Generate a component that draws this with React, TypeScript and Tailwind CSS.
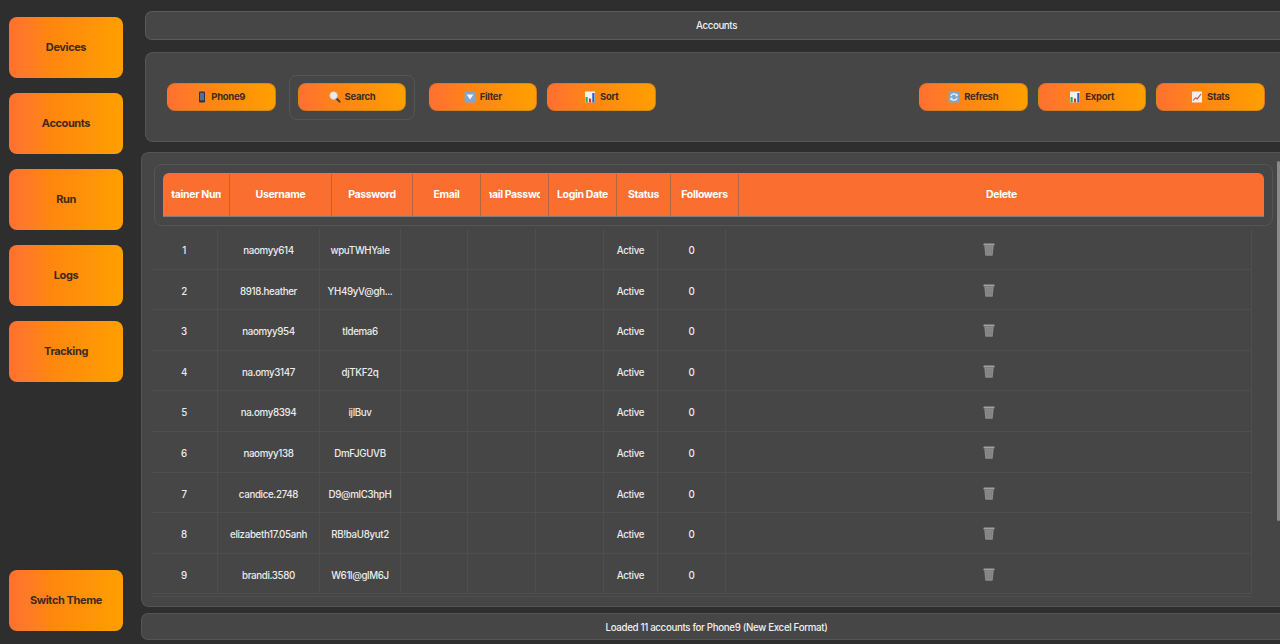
const sideItems = ["Devices", "Accounts", "Run", "Logs", "Tracking"];

const columns = [
  { label: "Container Number", head: "w-[67px]", body: "w-[66px]" },
  { label: "Username", head: "w-[102px]", body: "w-[102px]" },
  { label: "Password", head: "w-[81px]", body: "w-[81px]" },
  { label: "Email", head: "w-[68px]", body: "w-[67px]" },
  { label: "Email Password", head: "w-[68px]", body: "w-[68px]" },
  { label: "Login Date", head: "w-[68px]", body: "w-[68px]" },
  { label: "Status", head: "w-[54px]", body: "w-[54px]" },
  { label: "Followers", head: "w-[68px]", body: "w-[68px]" },
  { label: "Delete", head: "w-[525px]", body: "w-[526px]" },
];

const rows = [
  ["1", "naomyy614", "wpuTWHYale"],
  ["2", "8918.heather", "YH49yV@gh..."],
  ["3", "naomyy954", "tIdema6"],
  ["4", "na.omy3147", "djTKF2q"],
  ["5", "na.omy8394", "ijlBuv"],
  ["6", "naomyy138", "DmFJGUVB"],
  ["7", "candice.2748", "D9@mlC3hpH"],
  ["8", "elizabeth17.05anh", "RB!baU8yut2"],
  ["9", "brandi.3580", "W61l@glM6J"],
];

function PhoneIcon() {
  return (
    <svg width="10" height="12" viewBox="0 0 10 12">
      <rect x="2" y="0.5" width="6" height="11" rx="1" fill="#2b3442" />
      <rect x="3" y="1.8" width="4" height="7.6" fill="#56708c" />
    </svg>
  );
}

function SearchIcon() {
  return (
    <svg width="12" height="12" viewBox="0 0 12 12">
      <path d="M7 7l3.6 3.6" stroke="#4a3a30" strokeWidth="2" strokeLinecap="round" />
      <circle cx="4.6" cy="4.6" r="3.8" fill="#e6eef2" stroke="#c9ced2" strokeWidth="0.8" />
    </svg>
  );
}

function FilterIcon() {
  return (
    <svg width="12" height="12" viewBox="0 0 12 12">
      <rect x="0.5" y="0.5" width="11" height="11" rx="1.5" fill="#7fa6cf" />
      <path d="M2.5 3.5h7L6 8.5z" fill="#f4f7fa" />
    </svg>
  );
}

function BarsIcon() {
  return (
    <svg width="12" height="12" viewBox="0 0 12 12">
      <rect x="1" y="0.5" width="10" height="11" fill="#f2f2f2" />
      <rect x="1.5" y="6" width="2.2" height="5.5" fill="#2fa84f" />
      <rect x="4.9" y="7.5" width="2.2" height="4" fill="#d8342c" />
      <rect x="8.3" y="2" width="2.2" height="9.5" fill="#2a5fb8" />
    </svg>
  );
}

function RefreshIcon() {
  return (
    <svg width="12" height="12" viewBox="0 0 12 12" fill="none">
      <rect x="0.5" y="0.5" width="11" height="11" rx="1.5" fill="#7fa6cf" />
      <path d="M2.8 5.2A3.3 3.3 0 0 1 8.8 4.4M9.2 6.8A3.3 3.3 0 0 1 3.2 7.6" stroke="#f4f7fa" strokeWidth="1.2" />
      <path d="M9.6 2.6v2.6H7zM2.4 9.4V6.8H5z" fill="#f4f7fa" />
    </svg>
  );
}

function StatsIcon() {
  return (
    <svg width="12" height="12" viewBox="0 0 12 12" fill="none">
      <rect x="1" y="0.5" width="10" height="11" fill="#f0eeee" />
      <path d="M2 9.5l2.6-2.8 1.6 1.2L10 3" stroke="#d8483f" strokeWidth="1.1" />
    </svg>
  );
}

function TrashIcon() {
  return (
    <svg className="-mt-[3px]" width="12" height="13" viewBox="0 0 12 13">
      <rect x="0.5" y="0.5" width="11" height="2" rx="0.6" fill="#a0a0a0" />
      <path d="M1.3 2.5h9.4l-0.9 9.4a1 1 0 0 1-1 0.9H3.2a1 1 0 0 1-1-0.9z" fill="#8a8a8a" />
      <path d="M3.8 4v7M6 4v7M8.2 4v7" stroke="#787878" strokeWidth="0.6" />
    </svg>
  );
}

function ToolButton({ icon, label }: { icon: React.ReactNode; label: string }) {
  return (
    <button className="flex h-[28px] w-[108.5px] items-center justify-center gap-[4px] rounded-[8px] border border-[#b9771f]/50 bg-gradient-to-r from-[#ff7030] via-[#ff860f] via-40% to-[#ff9f00] text-[9.5px] font-bold tracking-[-0.3px] text-[#3f2a1c]">
      {icon}
      <span className="mt-[1px]">{label}</span>
    </button>
  );
}

function SideButton({ label }: { label: string }) {
  return (
    <button className="h-[61px] w-[114px] rounded-[8px] bg-gradient-to-r from-[#ff7030] via-[#ff860f] via-35% to-[#ff9f00] text-[11px] font-bold tracking-[-0.4px] text-[#3f2a1c]">
      {label}
    </button>
  );
}

export default function App() {
  return (
    <div className="flex h-[644px] w-[1280px] overflow-hidden bg-[#2e2e2e] font-['Inter',sans-serif]">
      {/* Sidebar */}
      <div className="flex w-[141px] shrink-0 flex-col pb-[13px] pl-[9px] pt-[17px]">
        <div className="flex flex-col gap-[15px]">
          {sideItems.map((item) => (
            <SideButton key={item} label={item} />
          ))}
        </div>
        <div className="mt-auto">
          <SideButton label="Switch Theme" />
        </div>
      </div>

      {/* Main */}
      <div className="flex min-w-0 flex-1 flex-col pt-[11px]">
        <div className="ml-[4px] flex h-[29px] items-center justify-center rounded-l-[7px] border border-r-0 border-[#5a5a5a] bg-[#464646] pl-[7px] pt-[2px] text-[9.75px] font-medium tracking-[-0.4px] text-[#f0f0f0]">
          Accounts
        </div>

        {/* Toolbar */}
        <div className="ml-[4px] mt-[12px] flex h-[90px] items-center rounded-l-[8px] border border-r-0 border-[#555555] bg-[#464646] pl-[21px] pr-[15.5px]">
          <ToolButton icon={<PhoneIcon />} label="Phone9" />
          <div className="ml-[13px] flex h-[45px] w-[126px] items-center justify-center rounded-[8px] border border-[#555555] pl-[1px]">
            <ToolButton icon={<SearchIcon />} label="Search" />
          </div>
          <div className="ml-[14px]">
            <ToolButton icon={<FilterIcon />} label="Filter" />
          </div>
          <div className="ml-[10px]">
            <ToolButton icon={<BarsIcon />} label="Sort" />
          </div>
          <div className="ml-auto flex gap-[10px]">
            <ToolButton icon={<RefreshIcon />} label="Refresh" />
            <ToolButton icon={<BarsIcon />} label="Export" />
            <ToolButton icon={<StatsIcon />} label="Stats" />
          </div>
        </div>

        {/* Table panel */}
        <div className="relative mt-[10px] h-[455px] overflow-hidden rounded-l-[8px] border border-r-0 border-[#555555] bg-[#464646] pl-[10px] pt-[11px]">
          <div className="absolute right-0 top-[8px] h-[360px] w-[3px] rounded-full bg-[#8a8a8a]" />
          <div className="ml-[2px] h-[62px] w-[1119px] rounded-[8px] border border-[#555555] p-[8px]">
            <div className="flex h-[44px] w-[1101px] overflow-hidden rounded-t-[6px] border-b border-[#7d7d7d] bg-[#fa6f30] pt-[1px]">
              {columns.map((col, i) => (
                <div
                  key={col.label}
                  className={`${col.head} flex shrink-0 items-center justify-center px-[8px] ${i < 8 ? "border-r border-[#b5663f]" : ""}`}
                >
                  <div className="flex w-full justify-center overflow-hidden">
                    <span className="shrink-0 whitespace-nowrap text-[10.5px] font-bold tracking-[-0.35px] text-white">{col.label}</span>
                  </div>
                </div>
              ))}
            </div>
          </div>

          <div className="mt-[3px] w-[1100px]">
            {rows.map((row) => (
              <div key={row[0]} className="flex h-[40.6px] border-b border-[#4e4e4e]">
                {columns.map((col, i) => (
                  <div
                    key={col.label}
                    className={`${col.body} flex shrink-0 items-center justify-center whitespace-nowrap border-r border-[#4e4e4e] pt-[5px] text-[9.75px] font-medium tracking-[-0.35px] text-[#ececec] ${i === 0 ? "pr-[1px]" : ""}`}
                  >
                    {i < 3 ? row[i] : null}
                    {i === 6 ? "Active" : null}
                    {i === 7 ? "0" : null}
                    {i === 8 ? <TrashIcon /> : null}
                  </div>
                ))}
              </div>
            ))}
            <div className="h-[3px] border-b border-[#4e4e4e]" />
          </div>
        </div>

        {/* Status */}
        <div className="mt-[6px] flex h-[27px] items-center justify-center rounded-l-[7px] border border-r-0 border-[#555555] bg-[#464646] pl-[11px] pt-[3px] text-[9.75px] font-medium tracking-[-0.35px] text-[#f0f0f0]">
          Loaded 11 accounts for Phone9 (New Excel Format)
        </div>
      </div>
    </div>
  );
}
